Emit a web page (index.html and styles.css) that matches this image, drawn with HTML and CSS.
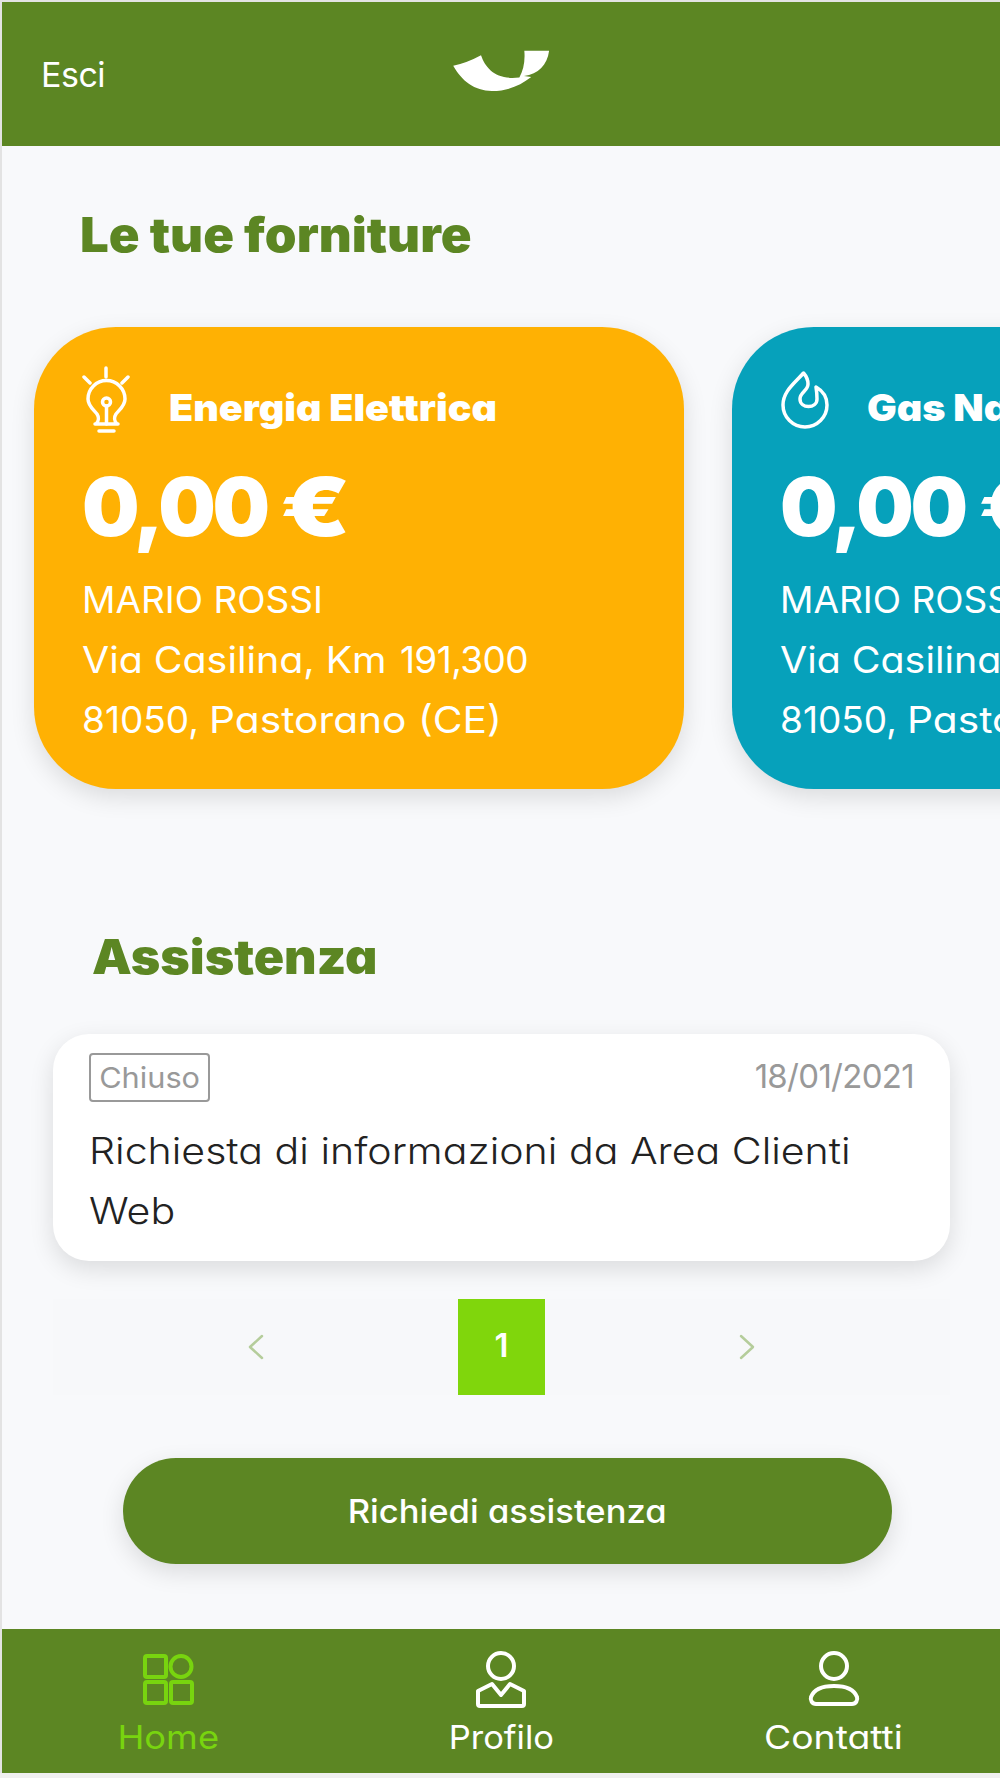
FILE: index.html
```
<!DOCTYPE html>
<html lang="it">

<head>
    <meta charset="UTF-8">
    <meta name="viewport" content="width=device-width, initial-scale=1.0">
    <title>Area Clienti</title>
    <link rel="stylesheet" href="styles.css">
</head>

<body>
    <div class="app">
        <header class="topbar">
            <a class="esci" href="#">Esci</a>
            <svg class="logo" viewBox="38 30 292 124">
                <path d="M38 78Q82 68 122 46C136 86 168 122 238 113C250 92 256 64 253 32H328C322 76 296 102 252 109L274 112C240 138 204 154 155 154C102 154 64 124 38 78Z" />
            </svg>
        </header>

        <main>
            <!-- forniture -->
            <h2 class="titolo forniture-titolo">Le tue forniture</h2>
            <div class="forniture">
                <div class="fornitura luce">
                    <div class="fornitura-testa">
                        <svg class="icona" viewBox="0 0 50 68">
                            <path d="M24 2v9M2 11l6 6M46 11l-6 6" />
                            <path d="M13 58h23M14 58c3-3 3-7 1-10-3-4-9-8-9-15a18.500 18.500 0 0 1 37 0c0 7-6 11-9 15-2 3-2 7 1 10" />
                            <circle cx="24.500" cy="36" r="4" />
                            <path d="M24.500 40v18M17 65h15" />
                        </svg>
                        <span class="nome">Energia Elettrica</span>
                    </div>
                    <div class="importo">0,00 <span class="euro">€</span></div>
                    <p class="indirizzo">
                        MARIO ROSSI<br>
                        <span class="via">Via Casilina, Km</span> <span class="civico">191,300</span><br>
                        81050, <span class="citta">Pastorano (CE)</span>
                    </p>
                </div>
                <div class="fornitura gas">
                    <div class="fornitura-testa">
                        <svg class="icona" viewBox="0 0 50 68">
                            <path d="M23.500 7C15 17 3 25 3 39a22 22 0 0 0 44 0c0-8-4-14-11-18 1 6 1 8 1 12 0 10-17 10-17 0 0-7 8-8 8-15 0-4-1-7-4.500-11z" />
                        </svg>
                        <span class="nome">Gas Naturale</span>
                    </div>
                    <div class="importo">0,00 <span class="euro">€</span></div>
                    <p class="indirizzo">
                        MARIO ROSSI<br>
                        <span class="via">Via Casilina, Km</span> <span class="civico">191,300</span><br>
                        81050, <span class="citta">Pastorano (CE)</span>
                    </p>
                </div>
            </div>

            <!-- assistenza -->
            <h2 class="titolo assistenza-titolo">Assistenza</h2>
            <div class="richiesta">
                <div class="richiesta-testa">
                    <span class="stato"><span class="stato-testo">Chiuso</span></span>
                    <span class="data">18/01/2021</span>
                </div>
                <p class="testo">Richiesta di informazioni da Area Clienti<br>Web</p>
            </div>

            <div class="pagine">
                <svg class="freccia" viewBox="0 0 16 26"><path d="M14 2L2 13l12 11" /></svg>
                <span class="pagina">1</span>
                <svg class="freccia" viewBox="0 0 16 26"><path d="M2 2l12 11L2 24" /></svg>
            </div>

            <button class="bottone"><span class="bottone-testo">Richiedi assistenza</span></button>
        </main>

        <nav class="menu">
            <a class="voce attiva" href="#">
                <svg class="voce-icona" viewBox="0 0 54 58">
                    <rect x="4" y="6" width="21" height="21" rx="2" />
                    <circle cx="40" cy="16.500" r="10.500" />
                    <rect x="4" y="32" width="21" height="21" rx="2" />
                    <rect x="30" y="32" width="21" height="21" rx="2" />
                </svg>
                <span class="v-home">Home</span>
            </a>
            <a class="voce" href="#">
                <svg class="voce-icona" viewBox="0 0 54 58">
                    <circle cx="27" cy="16" r="13" />
                    <path d="M18 34L4 41v13q0 2 2 2h42q2 0 2-2V41L36 34l-9 11z" />
                </svg>
                <span class="v-profilo">Profilo</span>
            </a>
            <a class="voce" href="#">
                <svg class="voce-icona" viewBox="0 0 54 58">
                    <circle cx="27" cy="16" r="13" />
                    <path d="M9 54h36c4 0 6-4 5-7-3-8-13-11-23-11S7 39 4 47c-1 3 1 7 5 7z" />
                </svg>
                <span class="v-contatti">Contatti</span>
            </a>
        </nav>
    </div>
</body>

</html>
```
FILE: styles.css
```
* {
    box-sizing: border-box;
}

body {
    margin: 0;
    background-color: #f0f0f0;
    font-family: Inter, "Open Sans", sans-serif;
    font-feature-settings: "cv11";
    overflow: hidden;
}

a {
    color: #fff;
    text-decoration: none;
}

svg {
    flex: none;
    fill: none;
    stroke: currentColor;
    stroke-linecap: round;
    stroke-linejoin: round;
}

.app {
    display: flex;
    flex-direction: column;
    height: 1773px;
    border-top: 2px solid #e3e3e3;
    border-left: 2px solid #e3e3e3;
    background-color: #f8f9fb;
    overflow: hidden;
}

.topbar {
    display: grid;
    grid-template-columns: 1fr auto 1fr;
    align-items: center;
    height: 144px;
    padding: 0 39px;
    background-color: #5c8623;
}

.esci {
    font-size: 34px;
    letter-spacing: -0.5px;
}

.logo {
    width: 97px;
    height: 41px;
    margin-bottom: 7px;
    fill: #fff;
    stroke: none;
}

main {
    flex: 1;
}

.titolo {
    margin: 0;
    color: #5c8623;
    font-size: 48px;
    font-weight: 900;
    line-height: 60px;
}

/* lettere un po' più larghe */
.forniture-titolo {
    padding: 59px 0 0 78px;
    transform: scaleX(1.06);
    transform-origin: 78px 0;
}

/* le card escono dal bordo destro */
.forniture {
    display: flex;
    gap: 48px;
    padding: 62px 0 0 32px;
}

.fornitura {
    flex: none;
    width: 650px;
    height: 462px;
    padding: 38px 48px;
    border-radius: 82px;
    color: #fff;
    box-shadow: 0 8px 24px rgba(0, 0, 0, 0.12);
}

.luce {
    background-color: #ffb103;
}

.gas {
    background-color: #06a1bb;
}

.fornitura-testa {
    display: flex;
    align-items: center;
    gap: 37px;
    height: 70px;
}

.icona {
    width: 50px;
    height: 68px;
    stroke-width: 3.5;
}

.nome {
    margin-top: 14px;
    font-size: 37px;
    font-weight: 900;
    white-space: nowrap;
    transform: scaleX(1.067);
    transform-origin: left;
}

.importo {
    margin: 27px 0 18px;
    font-size: 81px;
    font-weight: 900;
    letter-spacing: -3.2px;
    line-height: 90px;
    white-space: nowrap;
}

.euro {
    display: inline-block;
    transform: scaleX(1.25);
    transform-origin: left;
}

.indirizzo {
    margin: 0;
    font-size: 37px;
    line-height: 60px;
    white-space: nowrap;
}

.via,
.citta {
    display: inline-block;
    transform: scaleX(1.063);
    transform-origin: left;
}

.civico {
    margin-left: 21px;
    letter-spacing: -0.6px;
}

.citta {
    transform: scaleX(1.1);
}

.assistenza-titolo {
    padding: 138px 0 0 90px;
    transform: scaleX(1.045);
    transform-origin: 90px 0;
}

.richiesta {
    width: 897px;
    height: 227px;
    margin: 47px 0 0 51px;
    padding: 19px 36px;
    border-radius: 36px;
    background-color: #fff;
    box-shadow: 0 8px 24px rgba(0, 0, 0, 0.12);
}

.richiesta-testa {
    display: flex;
    justify-content: space-between;
    height: 49px;
    color: #999;
}

.stato {
    width: 121px;
    border: 2px solid #999;
    border-radius: 4px;
    font-size: 29px;
    line-height: 45px;
    text-align: center;
}

.stato-testo {
    display: inline-block;
    transform: scaleX(1.06);
}

.data {
    font-size: 33px;
    letter-spacing: -0.7px;
    line-height: 46px;
}

.testo {
    margin: 19px 0 0;
    color: #222;
    font-size: 37px;
    font-weight: 300;
    line-height: 60px;
    white-space: nowrap;
    transform: scaleX(1.11);
    transform-origin: left;
}

.pagine {
    display: flex;
    align-items: center;
    justify-content: space-between;
    width: 897px;
    height: 96px;
    margin: 38px 0 0 51px;
    padding: 0 195px;
    background-color: #f7f8fa;
}

.freccia {
    width: 16px;
    height: 26px;
    color: #b5cd9b;
    stroke-width: 2.5;
}

.pagina {
    width: 87px;
    height: 96px;
    background-color: #80d60c;
    color: #fff;
    font-size: 33px;
    font-weight: 600;
    line-height: 92px;
    text-align: center;
}

.bottone {
    display: block;
    width: 769px;
    height: 106px;
    margin: 63px 0 0 121px;
    border: none;
    border-radius: 53px;
    background-color: #5c8623;
    color: #fff;
    font: 500 33px Inter, "Open Sans", sans-serif;
    font-feature-settings: "cv11";
    box-shadow: 0 8px 24px rgba(0, 0, 0, 0.12);
}

.bottone-testo {
    display: inline-block;
    transform: scaleX(1.048);
}

.menu {
    display: flex;
    height: 144px;
    background-color: #5c8623;
}

.voce {
    display: flex;
    flex: 1;
    flex-direction: column;
    align-items: center;
    padding-top: 21px;
    font-size: 33px;
    line-height: 40px;
}

.voce-icona {
    width: 54px;
    height: 58px;
    margin-bottom: 9px;
    stroke-width: 4;
}

.attiva {
    color: #78d40f;
}

.v-home {
    transform: scaleX(1.1);
}

.v-profilo {
    transform: scaleX(1.045);
}

.v-contatti {
    transform: scaleX(1.13);
}
```
